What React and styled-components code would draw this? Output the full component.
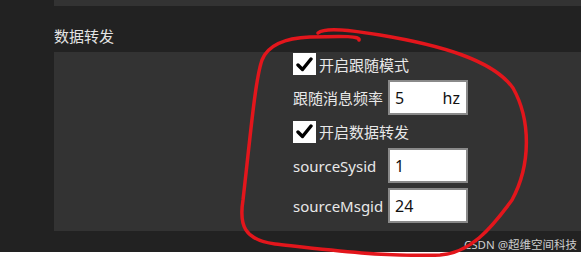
import React from "react";
import styled, { createGlobalStyle } from "styled-components";

const GlobalStyle = createGlobalStyle`
  body {
    margin: 0;
    background: #ffffff;
    font-family: "Noto Sans", "Noto Sans CJK SC", sans-serif;
  }
`;

const Screen = styled.div`
  position: relative;
  width: 581px;
  height: 257px;
  overflow: hidden;
`;

const Backdrop = styled.div`
  display: flex;
  flex-direction: column;
  height: 252px;
  background: #222222;
`;

const TopPanel = styled.div`
  margin-left: 54px;
  height: 6px;
  background: #333333;
`;

const Title = styled.div`
  margin-left: 54px;
  height: 46px;
  box-sizing: border-box;
  padding-top: 22px;
  font-size: 15px;
  line-height: 15px;
  color: #e4e4e4;
  font-family: "Noto Sans CJK SC", sans-serif;
`;

const Panel = styled.div`
  margin-left: 54px;
  height: 179px;
  box-sizing: border-box;
  padding: 1px 0 8px 239px;
  background: #333333;
  display: flex;
  flex-direction: column;
  gap: 5px;
`;

const Row = styled.div`
  display: flex;
  align-items: center;
  height: ${(p) => p.$h}px;
`;

const Box = styled.div`
  width: 23px;
  height: 22px;
  background: #ffffff;
  display: flex;
  align-items: center;
  justify-content: center;
  margin-right: 3px;
`;

const Label = styled.span`
  font-size: 15px;
  color: #e8e8e8;
  font-family: "Noto Sans", "Noto Sans CJK SC", sans-serif;
  width: ${(p) => (p.$w ? `${p.$w}px` : "auto")};
  white-space: nowrap;
`;

const Field = styled.div`
  width: 80px;
  height: 35px;
  box-sizing: border-box;
  border: 2px solid #8a8a8a;
  background: #ffffff;
  display: flex;
  align-items: center;
  justify-content: space-between;
  padding: 0 6px 0 5px;
  font-size: 16px;
  color: #111111;
`;

const Suffix = styled.span`
  color: #111111;
`;

const Overlay = styled.svg`
  position: absolute;
  left: 0;
  top: 0;
  pointer-events: none;
`;

const Watermark = styled.div`
  position: absolute;
  right: 4px;
  top: 236px;
  font-size: 11.5px;
  color: #cfcfcf;
  font-family: "Noto Sans", "Noto Sans CJK SC", sans-serif;
`;

function Check() {
  return (
    <Box>
      <svg width="17" height="15" viewBox="0 0 17 15">
        <path d="M2 8 L6.5 12.5 L15 2" fill="none" stroke="#000" strokeWidth="3.4" strokeLinecap="round" strokeLinejoin="round" />
      </svg>
    </Box>
  );
}

export default function App() {
  return (
    <Screen>
      <GlobalStyle />
      <Backdrop>
        <TopPanel />
        <Title>数据转发</Title>
        <Panel>
          <Row $h={22}>
            <Check />
            <Label>开启跟随模式</Label>
          </Row>
          <Row $h={35}>
            <Label $w={95}>跟随消息频率</Label>
            <Field>
              <span>5</span>
              <Suffix>hz</Suffix>
            </Field>
          </Row>
          <Row $h={23}>
            <Check />
            <Label>开启数据转发</Label>
          </Row>
          <Row $h={35}>
            <Label $w={95}>sourceSysid</Label>
            <Field>
              <span>1</span>
            </Field>
          </Row>
          <Row $h={35}>
            <Label $w={95}>sourceMsgid</Label>
            <Field>
              <span>24</span>
            </Field>
          </Row>
        </Panel>
      </Backdrop>
      <Watermark>CSDN @超维空间科技</Watermark>
      <Overlay width="581" height="257" viewBox="0 0 581 257">
        <path
          d="M359 40 C360 36, 345 36, 310 37 C285 38, 268 45, 262 60 C255 80, 250 140, 243 200 C239 225, 244 240, 275 244 C320 249, 380 257, 440 255 C470 253, 490 230, 512 200 C531 165, 531 120, 513 88 C493 60, 440 45, 380 35 C350 30, 325 27, 318 33"
          fill="none"
          stroke="#e3161c"
          strokeWidth="3.5"
          strokeLinecap="round"
        />
      </Overlay>
    </Screen>
  );
}
